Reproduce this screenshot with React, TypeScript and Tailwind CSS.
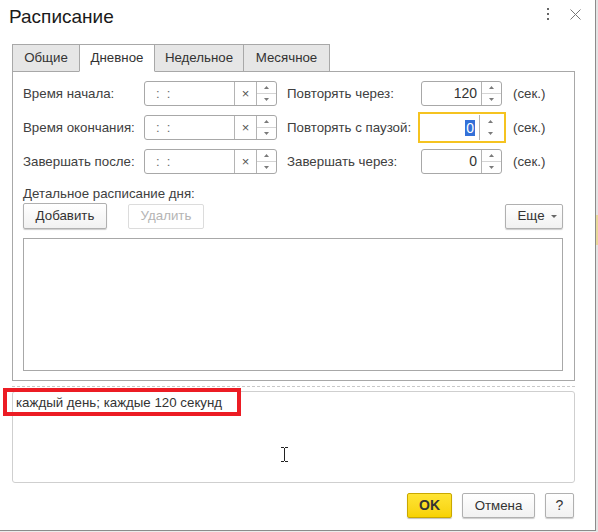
import React from "react";

const FONT = "font-['Liberation_Sans',Arial,sans-serif]";

function Arrows() {
  return (
    <div className="flex w-[20px] flex-col border-l border-[#b4b4b4]">
      <div className="flex h-1/2 items-center justify-center border-b border-[#d4d4d4]">
        <svg width="5" height="3" viewBox="0 0 5 3">
          <path d="M2.5 0 L5 3 L0 3 Z" fill="#7a7a7a" />
        </svg>
      </div>
      <div className="flex h-1/2 items-center justify-center">
        <svg width="5" height="3" viewBox="0 0 5 3">
          <path d="M0 0 L5 0 L2.5 3 Z" fill="#7a7a7a" />
        </svg>
      </div>
    </div>
  );
}

function TimeField() {
  return (
    <div className="flex h-[25px] w-[133px] rounded-[3px] border border-[#a8a8a8] bg-white">
      <div className="flex flex-1 items-center pl-[11px] text-[13px] text-[#6b6b6b]">
        <span>:</span>
        <span className="ml-[7px]">:</span>
      </div>
      <div className="flex w-[22px] items-center justify-center border-l border-[#b4b4b4] text-[13px] leading-none text-[#555]">
        ×
      </div>
      <Arrows />
    </div>
  );
}

function NumField({ value }: { value: string }) {
  return (
    <div className="flex h-[25px] w-[81px] rounded-[3px] border border-[#a8a8a8] bg-white">
      <div className="flex flex-1 items-center justify-end pr-[4px] text-[14px] text-[#333]">
        {value}
      </div>
      <Arrows />
    </div>
  );
}

function FocusedNumField() {
  return (
    <div className="-ml-[3px] -my-[3px] flex h-[31px] w-[88px] shrink-0 border-2 border-[#f5c320] bg-white">
      <div className="flex flex-1 items-center justify-end pr-[4px] text-[14px]">
        <span className="bg-[#3370d8] px-[1px] leading-[16px] text-white">0</span>
      </div>
      <div className="my-[1px] mr-[4px] flex w-[21px] flex-col border-l border-[#b4b4b4]">
        <div className="flex h-1/2 items-center justify-center">
          <svg width="5" height="3" viewBox="0 0 5 3">
            <path d="M2.5 0 L5 3 L0 3 Z" fill="#7a7a7a" />
          </svg>
        </div>
        <div className="flex h-1/2 items-center justify-center">
          <svg width="5" height="3" viewBox="0 0 5 3">
            <path d="M0 0 L5 0 L2.5 3 Z" fill="#7a7a7a" />
          </svg>
        </div>
      </div>
    </div>
  );
}

function Row({
  left,
  right,
  focused,
  value,
}: {
  left: string;
  right: string;
  focused?: boolean;
  value: string;
}) {
  return (
    <div className="flex h-[25px] items-center">
      <div className="w-[121px] text-[13.3px] text-[#404040]">{left}</div>
      <TimeField />
      <div className="ml-[10px] w-[134px] text-[13.3px] text-[#404040]">{right}</div>
      <div className="flex h-[25px] w-[81px] items-center">
        {focused ? <FocusedNumField /> : <NumField value={value} />}
      </div>
      <div className="ml-[11px] text-[13.3px] text-[#404040]">(сек.)</div>
    </div>
  );
}

function Tab({ label, active, w }: { label: string; active?: boolean; w: string }) {
  return (
    <div
      className={
        "flex h-[28px] items-center justify-center border border-[#a8a8a8] text-[13.3px] text-[#333] -ml-px first:ml-0 " +
        w +
        (active ? " relative z-10 border-b-white bg-white" : " bg-[#e6e6e6]")
      }
    >
      {label}
    </div>
  );
}

export default function App() {
  return (
    <div className={"flex h-[532px] w-[598px] bg-[#ececec] " + FONT}>
      <div className="flex h-[531px] w-[596px] flex-col border-r border-b border-[#8c8c8c] bg-white">
        {/* header */}
        <div className="flex h-[44px] items-start pl-[9px] pt-[6px]">
          <div className="text-[19px] leading-[22px] text-[#1a1a1a]">Расписание</div>
          <div className="ml-auto mr-[14px] mt-[2px] flex items-center gap-[20px]">
            <svg width="4" height="12" viewBox="0 0 4 12">
              <rect x="1" y="0" width="2" height="2" fill="#666" />
              <rect x="1" y="5" width="2" height="2" fill="#666" />
              <rect x="1" y="10" width="2" height="2" fill="#666" />
            </svg>
            <svg width="11" height="11" viewBox="0 0 11 11">
              <path d="M0.5 0.5 L10.5 10.5 M10.5 0.5 L0.5 10.5" stroke="#777" strokeWidth="1" />
            </svg>
          </div>
        </div>

        {/* tabs */}
        <div className="ml-[12px] flex">
          <Tab label="Общие" w="w-[68px]" />
          <Tab label="Дневное" w="w-[76px]" active />
          <Tab label="Недельное" w="w-[90px]" />
          <Tab label="Месячное" w="w-[87px]" />
        </div>

        {/* tab page */}
        <div className="-mt-px ml-[12px] flex h-[310px] w-[563px] flex-col border border-[#a8a8a8] pl-[10px] pt-[9px]">
          <div className="flex flex-col gap-[9px]">
            <Row left="Время начала:" right="Повторять через:" value="120" />
            <Row left="Время окончания:" right="Повторять с паузой:" value="0" focused />
            <Row left="Завершать после:" right="Завершать через:" value="0" />
          </div>
          <div className="mt-[12px] text-[13.3px] leading-[16px] text-[#404040]">
            Детальное расписание дня:
          </div>
          <div className="mt-[1px] flex h-[26px] w-[540px] items-center">
            <div className="flex h-[26px] w-[84px] items-center justify-center rounded-[2px] border border-[#b0b0b0] bg-gradient-to-b from-white to-[#f1f1f1] text-[13.3px] text-[#333] shadow-[0_1px_1px_rgba(0,0,0,0.2)]">
              Добавить
            </div>
            <div className="ml-[21px] flex h-[25px] w-[76px] items-center justify-center rounded-[2px] border border-[#dcdcdc] bg-white text-[13.3px] text-[#b4b4b4]">
              Удалить
            </div>
            <div className="ml-auto flex h-[25px] w-[58px] items-center justify-center gap-[6px] rounded-[2px] border border-[#b0b0b0] bg-gradient-to-b from-white to-[#f1f1f1] pl-[6px] text-[13.3px] text-[#333] shadow-[0_1px_1px_rgba(0,0,0,0.2)]">
              <span>Еще</span>
              <svg width="6" height="3" viewBox="0 0 6 3">
                <path d="M0 0 L6 0 L3 3 Z" fill="#666" />
              </svg>
            </div>
          </div>
          <div className="mt-[9px] h-[133px] w-[540px] border border-[#a8a8a8] bg-white" />
        </div>

        {/* splitter */}
        <div className="ml-[12px] mt-[5px] w-[563px] border-t border-dashed border-[#c8c8c8]" />

        {/* description */}
        <div className="relative ml-[12px] mt-[4px] h-[92px] w-[563px] rounded-[3px] border border-[#cfcfcf] bg-white">
          <div className="pl-[3px] pt-[3px] text-[13.3px] leading-[16px] text-[#333]">
            каждый день; каждые 120 секунд
          </div>
          <div className="absolute -left-[10px] -top-[4px] h-[28px] w-[238px] border-4 border-[#ec1c24]" />
          <svg className="absolute left-[268px] top-[55px]" width="7" height="15" viewBox="0 0 7 15">
            <path d="M0 0.5 H3 M4 0.5 H7 M3.5 1 V14 M0 14.5 H3 M4 14.5 H7" stroke="#222" strokeWidth="1" fill="none" />
          </svg>
        </div>

        {/* footer */}
        <div className="mt-[10px] flex h-[25px] justify-end gap-[10px] pr-[21px]">
          <div className="flex w-[45px] items-center justify-center rounded-[2px] border border-[#c9a800] bg-gradient-to-b from-[#ffe433] to-[#f7d200] text-[14px] font-bold text-[#333] shadow-[0_1px_1px_rgba(0,0,0,0.25)]">
            OK
          </div>
          <div className="flex w-[73px] items-center justify-center rounded-[2px] border border-[#b0b0b0] bg-gradient-to-b from-white to-[#f1f1f1] text-[13.3px] text-[#333] shadow-[0_1px_1px_rgba(0,0,0,0.2)]">
            Отмена
          </div>
          <div className="flex w-[29px] items-center justify-center rounded-[2px] border border-[#b0b0b0] bg-gradient-to-b from-white to-[#f1f1f1] text-[14px] text-[#333] shadow-[0_1px_1px_rgba(0,0,0,0.2)]">
            ?
          </div>
        </div>
      </div>

      {/* window behind the dialog */}
      <div className="flex w-[2px] flex-col bg-[#e4e4e4]">
        <div className="mt-[215px] h-[30px] bg-[#e8d89a]" />
      </div>
    </div>
  );
}
